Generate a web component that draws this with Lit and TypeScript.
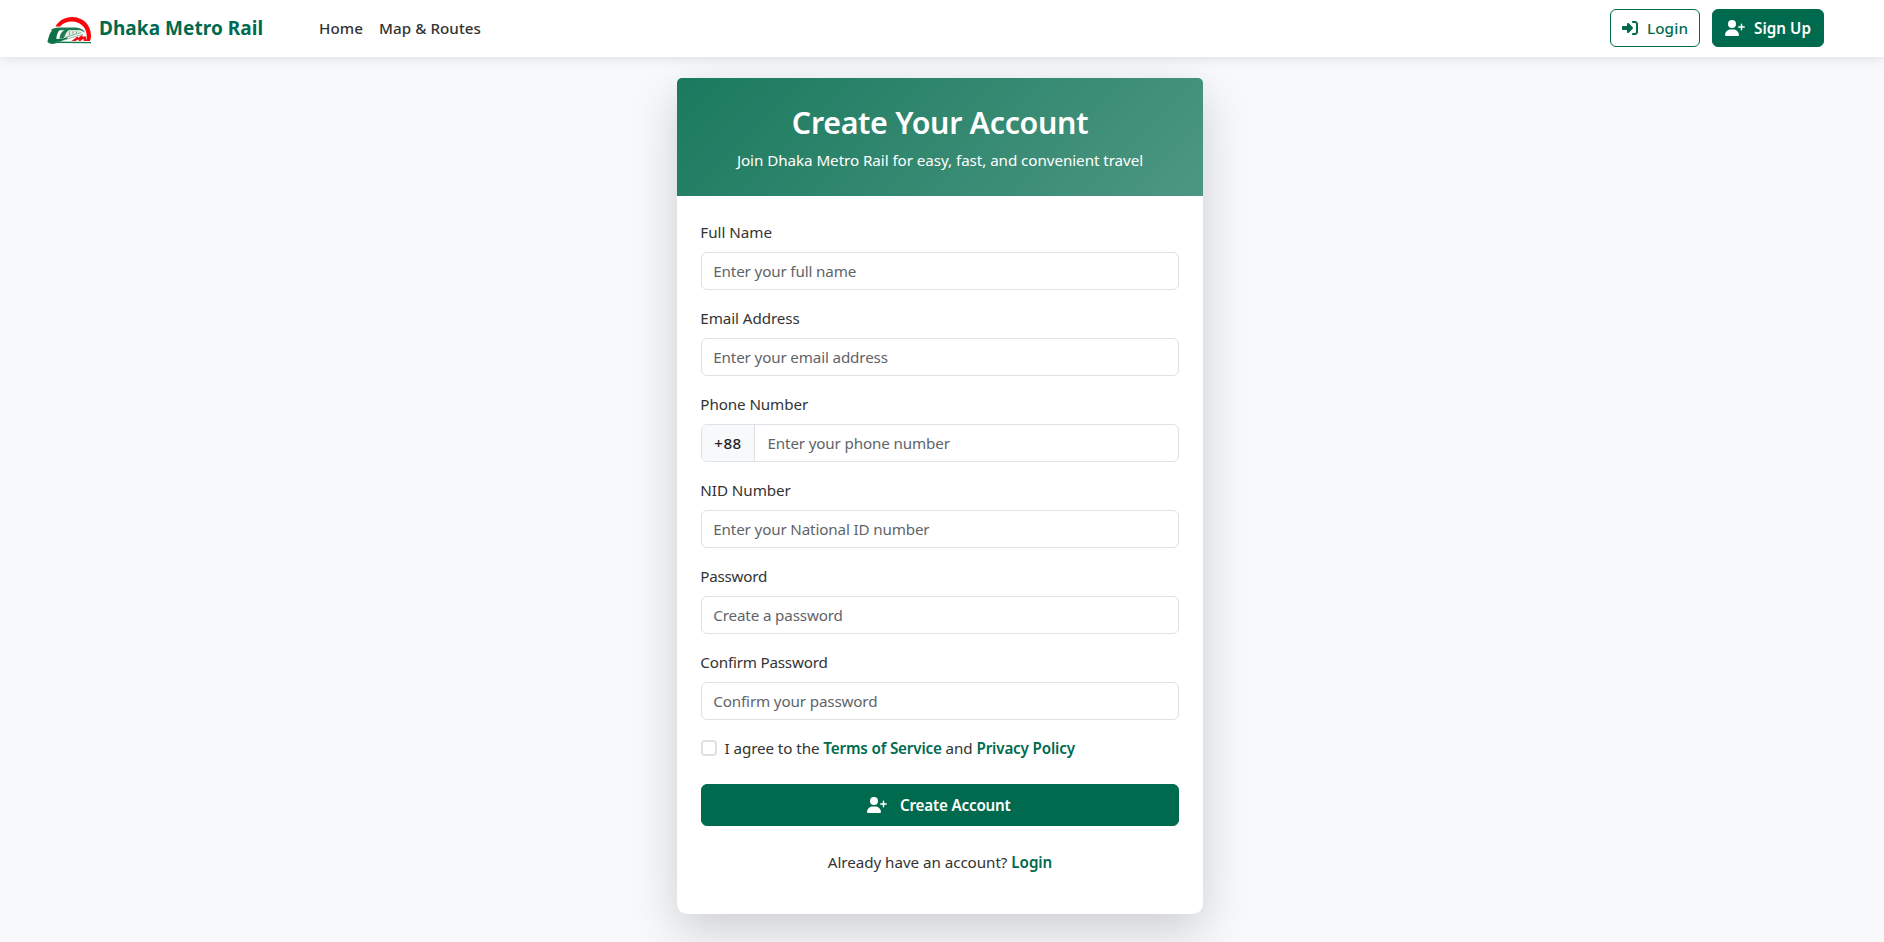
import { LitElement, html, css, svg } from "lit";
import { customElement } from "lit/decorators.js";
import { styleMap } from "lit/directives/style-map.js";

interface Field {
  id: string;
  label: string;
  placeholder: string;
  type: string;
  tracking: number;
  prefix?: string;
}

const FIELDS: Field[] = [
  { id: "name", label: "Full Name", placeholder: "Enter your full name", type: "text", tracking: -0.03 },
  { id: "email", label: "Email Address", placeholder: "Enter your email address", type: "email", tracking: -0.08 },
  { id: "phone", label: "Phone Number", placeholder: "Enter your phone number", type: "tel", tracking: -0.1, prefix: "+88" },
  { id: "nid", label: "NID Number", placeholder: "Enter your National ID number", type: "text", tracking: -0.05 },
  { id: "password", label: "Password", placeholder: "Create a password", type: "password", tracking: -0.24 },
  { id: "confirm", label: "Confirm Password", placeholder: "Confirm your password", type: "password", tracking: -0.2 },
];

const userPlus = svg`<svg class="icon wide" viewBox="0 0 640 512" aria-hidden="true"><path fill="currentColor" d="M96 128a128 128 0 1 1 256 0A128 128 0 1 1 96 128zM0 482.3C0 383.8 79.8 304 178.3 304l91.4 0C368.2 304 448 383.8 448 482.3c0 16.4-13.3 29.7-29.7 29.7L29.7 512C13.3 512 0 498.7 0 482.3zM504 312l0-64-64 0c-13.3 0-24-10.7-24-24s10.7-24 24-24l64 0 0-64c0-13.3 10.7-24 24-24s24 10.7 24 24l0 64 64 0c13.3 0 24 10.7 24 24s-10.7 24-24 24l-64 0 0 64c0 13.3-10.7 24-24 24s-24-10.7-24-24z"/></svg>`;

const signIn = svg`<svg class="icon" viewBox="0 0 512 512" aria-hidden="true"><path fill="currentColor" d="M217.9 105.9L340.7 228.7c7.2 7.2 11.3 17.1 11.3 27.3s-4.1 20.1-11.3 27.3L217.9 406.1c-6.4 6.4-15 9.9-24 9.9c-18.7 0-33.9-15.2-33.9-33.9l0-62.1L32 320c-17.7 0-32-14.3-32-32l0-64c0-17.7 14.3-32 32-32l128 0 0-62.1c0-18.7 15.2-33.9 33.9-33.9c9 0 17.6 3.6 24 9.9zM352 416l64 0c17.7 0 32-14.3 32-32l0-256c0-17.7-14.3-32-32-32l-64 0c-17.7 0-32-14.3-32-32s14.3-32 32-32l64 0c53 0 96 43 96 96l0 256c0 53-43 96-96 96l-64 0c-17.7 0-32-14.3-32-32s14.3-32 32-32z"/></svg>`;

const logo = svg`<svg class="logo" viewBox="0 0 44 27" aria-hidden="true">
  <path fill="#f8070b" d="M8.500 9.500C12 3.500 18 0 25 0C36 0 44 8 44 18.500C44 20.600 43.600 22.500 43 24L39 24C39.800 21.500 39.900 19.500 39.500 17C38.600 9.500 32.500 4.600 25 4.600C20 4.600 16 6.400 13 9.500Z"/>
  <path fill="#1d7a50" d="M4.500 12.500C5.500 11.300 8 10.600 12 10.400L29 10.600C34 11.200 37 13 38 15.500L33.500 13.300L12.500 13.200L10.500 14.500L4 13.500Z"/>
  <path fill="#0f6f45" d="M1 23C2 18.500 3.500 14 7 12L13 12.500C10.500 15 9.500 18.500 9.300 22L16 21.600L21 20L20 22L13 24.500L4 25.500C2 25.300 .7 24.500 1 23Z"/>
  <path fill="#1d7a50" d="M12.500 21.500C12.700 18 14.500 14.500 17.500 13L22 13C19.500 15 18 17.500 17.500 20L16 21.500Z"/>
  <path fill="#dfeae2" d="M21.500 13.600L32.500 13.600L35.500 15.300L18.500 20.500C18.700 18 19.600 15.500 21.500 13.600Z"/>
  <path fill="none" stroke="#5d9d7b" stroke-width=".7" d="M22.500 14V18.500M26 14V17.500M29.500 14V16.500M18 20.600L34 15.600M17 23L36 17.200"/>
  <path fill="#f8070b" d="M24.500 24L30.500 19.500L31.500 20.800L35 18L36 20L38.500 19L39.500 24L37 24L36.300 21.700L33.500 24L31.800 24L31.300 22.200L28.500 24Z"/>
  <path fill="#0f7a4c" d="M0 23.500C3 24.800 7 24.700 11 24.400L44 24.900V26.200L10 26L6 27C3 27 .5 26 0 23.500Z"/>
</svg>`;

@customElement("app-root")
export class AppRoot extends LitElement {
  static styles = css`
    :host {
      display: block;
      min-height: 942px;
      background: #f8f9fb;
      color: #333;
      font: 400 15.2px/24px "Noto Sans", "Open Sans", sans-serif;
      letter-spacing: -0.1px;
    }
    * { box-sizing: border-box; }
    a { color: #006a4e; text-decoration: none; }

    .navbar {
      position: relative;
      z-index: 1;
      display: flex;
      align-items: center;
      height: 57px;
      padding: 0 60px 1px 47px;
      background: #fff;
      box-shadow: 0 2px 10px rgba(0, 0, 0, 0.1);
    }
    .brand {
      display: flex;
      align-items: center;
      gap: 8px;
      width: 272px;
      font-size: 19px;
      font-weight: 700;
      letter-spacing: 0.053px;
    }
    .logo { width: 44px; height: 27px; margin-top: 5px; }
    .links { display: flex; flex: 1; gap: 16px; padding-left: 0; }
    .links a { color: #333; font-weight: 500; letter-spacing: 0.05px; }
    .actions { display: flex; gap: 12px; }

    .button {
      display: flex;
      align-items: center;
      justify-content: center;
      height: 38px;
      border: 1px solid #006a4e;
      border-radius: 6px;
      color: #006a4e;
      font-weight: 500;
    }
    .button.login { width: 90px; gap: 9px; letter-spacing: 0.15px; }
    .button.signup { width: 112px; gap: 9px; letter-spacing: 0.05px; }
    .button.solid { background: #006a4e; color: #fff; font-weight: 600; }
    .icon { width: 16px; height: 16px; flex: none; }
    .icon.wide { width: 20px; }

    main { display: flex; justify-content: center; padding: 21px 4px 0 0; }
    .card {
      width: 526px;
      background: #fff;
      border-radius: 6px 6px 10px 10px;
      box-shadow: 0 16px 48px rgba(0, 0, 0, 0.175);
    }
    .heading {
      padding: 26px 24px 24px;
      border-radius: 5px 5px 0 0;
      background: linear-gradient(135deg, #1a7a5e, #338870 50%, #4d9782);
      color: #fff;
      text-align: center;
    }
    h1 {
      margin: 0 0 6px;
      font-size: 30.4px;
      line-height: 38.4px;
      font-weight: 600;
      letter-spacing: -0.32px;
    }
    .heading p { margin: 0; letter-spacing: -0.06px; }

    form { padding: 24px 24px 40px; }
    .field { margin-bottom: 16px; }
    .field label { display: block; margin: 0 0 8px -0.7px; }
    .group {
      display: flex;
      height: 38px;
      border: 1px solid #dee2e6;
      border-radius: 6px;
      overflow: hidden;
      background: #fff;
    }
    .prefix {
      display: flex;
      align-items: center;
      justify-content: center;
      width: 53px;
      border-right: 1px solid #dee2e6;
      background: #f8f9fb;
      color: #212529;
      font-weight: 500;
      letter-spacing: 0.5px;
    }
    .prefix + .control { padding-left: 12.5px; }
    input { font: inherit; }
    .control {
      flex: 1;
      min-width: 0;
      padding: 0 11.3px;
      border: 0;
      outline: 0;
      background: transparent;
      letter-spacing: -0.145px;
    }
    .control::placeholder { color: #5f6469; opacity: 1; }

    .terms { display: flex; align-items: center; gap: 7.5px; letter-spacing: -0.08px; }
    .terms input {
      appearance: none;
      width: 16px;
      height: 16px;
      margin: 0;
      border: 2px solid #dee2e6;
      border-radius: 4px;
      background: #fff;
    }
    .terms a, .switch a { font-weight: 600; }
    .terms a { letter-spacing: -0.16px; }
    .submit {
      width: 100%;
      height: 42px;
      margin: 24px 0;
      padding: 0 8px 0 6px;
      gap: 12.5px;
      font: inherit;
      letter-spacing: -0.17px;
    }
    .switch { margin: 0; text-align: center; letter-spacing: -0.05px; }
  `;

  private renderField(f: Field) {
    return html`
      <div class="field">
        <label for=${f.id} style=${styleMap({ letterSpacing: `${f.tracking}px` })}>${f.label}</label>
        <div class="group">
          ${f.prefix ? html`<span class="prefix">${f.prefix}</span>` : null}
          <input class="control" id=${f.id} type=${f.type} placeholder=${f.placeholder} />
        </div>
      </div>`;
  }

  render() {
    return html`
      <nav class="navbar">
        <a class="brand" href="#">${logo}<span>Dhaka Metro Rail</span></a>
        <div class="links"><a href="#">Home</a><a href="#">Map &amp; Routes</a></div>
        <div class="actions">
          <a class="button login" href="#">${signIn}<span>Login</span></a>
          <a class="button signup solid" href="#">${userPlus}<span>Sign Up</span></a>
        </div>
      </nav>
      <main>
        <section class="card">
          <header class="heading">
            <h1>Create Your Account</h1>
            <p>Join Dhaka Metro Rail for easy, fast, and convenient travel</p>
          </header>
          <form>
            ${FIELDS.map((f) => this.renderField(f))}
            <div class="terms">
              <input type="checkbox" id="agree" />
              <label for="agree">I agree to the <a href="#">Terms of Service</a> and <a href="#">Privacy Policy</a></label>
            </div>
            <button class="button submit solid" type="button">${userPlus}<span>Create Account</span></button>
            <p class="switch">Already have an account? <a href="#">Login</a></p>
          </form>
        </section>
      </main>`;
  }
}
